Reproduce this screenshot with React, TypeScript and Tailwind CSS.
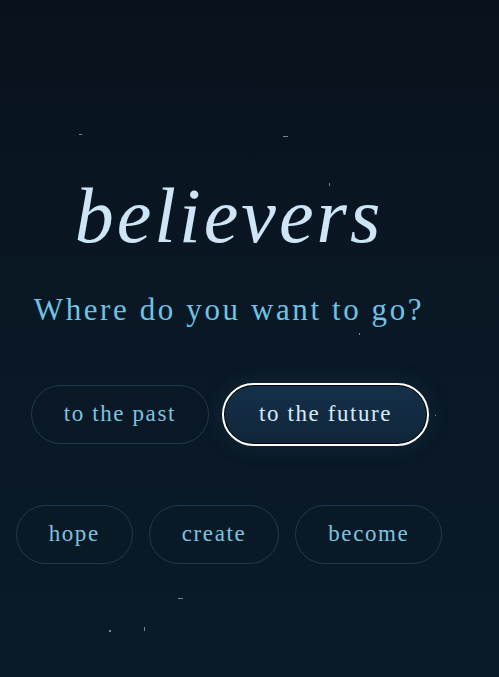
import clsx from "clsx";

const serif = { fontFamily: '"Liberation Serif", "DejaVu Serif", serif' };

const stars = [
	"left-[79px] top-[134px] w-[3px] h-[1px]",
	"left-[283px] top-[136px] w-[5px] h-[1px]",
	"left-[329px] top-[183px] w-[1px] h-[3px]",
	"left-[359px] top-[333px] w-[1px] h-[2px]",
	"left-[435px] top-[415px] w-[1px] h-[1px]",
	"left-[178px] top-[598px] w-[5px] h-[1px]",
	"left-[109px] top-[630px] w-[2px] h-[2px]",
	"left-[144px] top-[627px] w-[1px] h-[4px]",
];

function Pill({ label, active = false }: { label: string; active?: boolean }) {
	return (
		<button
			className={clsx(
				"h-[59px] rounded-full text-[23px] tracking-[1.6px] whitespace-nowrap",
				active
					? "px-[34px] bg-gradient-to-b from-[#15304a] to-[#10263a] text-[#d5ebf8] border border-black outline-2 outline-white shadow-[0_0_24px_rgba(60,130,180,0.18)]"
					: "px-[32px] border border-[#1d3b4e] text-[#7cc3e0] bg-transparent",
			)}
			style={serif}
		>
			{label}
		</button>
	);
}

export default function App() {
	return (
		<div className="relative min-h-screen w-full overflow-hidden bg-gradient-to-b from-[#08121d] via-[#0a1825] to-[#0a1a27]">
			{stars.map((s, i) => (
				<span key={i} className={clsx("absolute bg-[#8aa6b8] opacity-80", s)} />
			))}
			<div className="flex w-[458px] flex-col items-center pt-[177px] pb-[114px]">
				<h1
					className="text-[78px] leading-none italic tracking-[3px] text-[#cde5f6]"
					style={serif}
				>
					believers
				</h1>
				<p
					className="mt-[39px] text-[31px] leading-none tracking-[2.6px] text-[#6fc2e4]"
					style={serif}
				>
					Where do you want to go?
				</p>
				<div className="mt-[60px] flex items-center gap-[15px]">
					<Pill label="to the past" />
					<Pill label="to the future" active />
				</div>
				<div className="mt-[61px] flex items-center gap-4">
					<Pill label="hope" />
					<Pill label="create" />
					<Pill label="become" />
				</div>
			</div>
		</div>
	);
}
